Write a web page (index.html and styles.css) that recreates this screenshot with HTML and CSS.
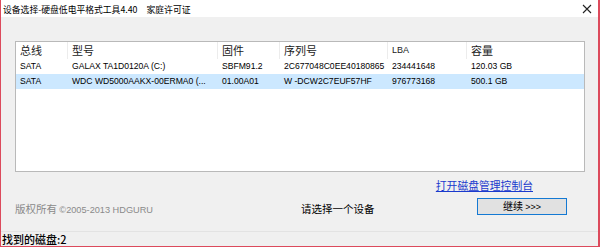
FILE: index.html
```html
<!DOCTYPE html>
<html lang="zh-CN">
<head>
<meta charset="utf-8">
<title>设备选择</title>
<link rel="stylesheet" href="styles.css">
</head>
<body>
<div class="window">
  <div class="titlebar">
    <span class="title">设备选择-硬盘低电平格式工具4.40<span class="lic">家庭许可证</span></span>
    <svg class="close" width="10" height="10" viewBox="0 0 10 10"><path d="M1 1L9 9M9 1L1 9" stroke="#222" stroke-width="1.1" fill="none"/></svg>
  </div>
  <div class="body">
    <div class="listbox">
      <div class="grid head">
        <div class="cell">总线</div>
        <div class="cell">型号</div>
        <div class="cell">固件</div>
        <div class="cell">序列号</div>
        <div class="cell lat">LBA</div>
        <div class="cell">容量</div>
      </div>
      <div class="grid row">
        <div class="cell">SATA</div>
        <div class="cell">GALAX TA1D0120A (C:)</div>
        <div class="cell">SBFM91.2</div>
        <div class="cell">2C677048C0EE40180865</div>
        <div class="cell">234441648</div>
        <div class="cell">120.03 GB</div>
      </div>
      <div class="grid row selected">
        <div class="cell">SATA</div>
        <div class="cell">WDC WD5000AAKX-00ERMA0 (...</div>
        <div class="cell">01.00A01</div>
        <div class="cell">W -DCW2C7EUF57HF</div>
        <div class="cell">976773168</div>
        <div class="cell">500.1 GB</div>
      </div>
    </div>
    <div class="linkrow"><a class="link" href="#">打开磁盘管理控制台</a></div>
    <div class="actions">
      <div class="copyright">版权所有 <span class="lat">©2005-2013 HDGURU</span></div>
      <div class="message">请选择一个设备</div>
      <button class="btn">继续 <span class="lat">&gt;&gt;&gt;</span></button>
    </div>
  </div>
  <div class="status">找到的磁盘:2</div>
</div>
</body>
</html>
```

FILE: styles.css
```css
* { box-sizing: border-box; }
html, body { margin: 0; padding: 0; }
body {
  width: 600px;
  height: 247px;
  overflow: hidden;
  background: #f0f0f0;
  font-family: "Noto Sans CJK SC", "Liberation Sans", sans-serif;
  color: #000;
}
.window {
  width: 600px;
  height: 247px;
  display: flex;
  flex-direction: column;
  border-left: 1px solid #dc4a5c;
  border-right: 2px solid #dc4a5c;
  border-bottom: 1px solid #dc4a5c;
  background: #f0f0f0;
}
.titlebar {
  height: 17px;
  background: #fff;
  display: flex;
  align-items: center;
  justify-content: space-between;
  padding: 0 6px 0 2px;
}
.title {
  font-size: 8.8px;
  line-height: 13px;
  white-space: nowrap;
  padding-top: 1px;
}
.lic { margin-left: 9px; }
.close { display: block; margin-top: 1px; }
.body {
  padding: 24px 0 0 14px;
  flex: 1;
}
.listbox {
  width: 570px;
  height: 131px;
  background: #fff;
  border: 1px solid #b9b9b9;
}
.grid {
  display: grid;
  grid-template-columns: 52px 150px 62px 108px 79px 1fr;
}
.head {
  height: 17px;
  font-size: 11px;
  line-height: 17px;
  color: #222;
}
.head .cell {
  border-right: 1px solid #ececec;
}
.head .cell:last-child { border-right: 0; }
.head .lat {
  font-family: "Liberation Sans", sans-serif;
  font-size: 9px;
}
.cell {
  padding-left: 4px;
  white-space: nowrap;
  overflow: hidden;
}
.row {
  height: 15px;
  font-family: "Liberation Sans", sans-serif;
  font-size: 8.6px;
  line-height: 15px;
}
.selected { background: #cce8ff; }
.linkrow {
  width: 518px;
  margin-top: 7px;
  height: 12px;
  display: flex;
  justify-content: flex-end;
}
.link {
  font-size: 10.8px;
  line-height: 12px;
  color: #1a3acd;
  text-decoration: underline;
  white-space: nowrap;
}
.actions {
  margin-top: 7px;
  display: flex;
  align-items: center;
  height: 17px;
}
.copyright {
  width: 286px;
  font-size: 10.5px;
  color: #8a8a8a;
  padding-top: 4px;
  white-space: nowrap;
}
.copyright .lat {
  font-family: "Liberation Sans", sans-serif;
  font-size: 9.2px;
}
.message {
  width: 176px;
  font-size: 10.5px;
  padding-top: 4px;
  white-space: nowrap;
}
.btn {
  width: 90px;
  height: 17px;
  padding: 0;
  margin: 0;
  border: 1px solid #1479d3;
  background: #e1e1e1;
  font-family: "Noto Sans CJK SC", sans-serif;
  font-size: 10px;
  line-height: 14px;
  color: #000;
}
.btn .lat {
  font-family: "Liberation Sans", sans-serif;
  font-size: 9px;
}
.status {
  height: 15px;
  border-top: 1px solid #e3e3e3;
  padding-left: 1px;
  font-size: 11px;
  font-weight: 500;
  line-height: 14px;
  white-space: nowrap;
}
```
